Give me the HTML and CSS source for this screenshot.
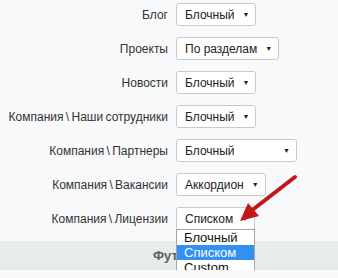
FILE: index.html
```html
<!DOCTYPE html>
<html lang="ru">
<head>
  <meta charset="UTF-8" />
  <title>Настройки разделов</title>
  <link rel="stylesheet" href="styles.css">
</head>
<body>
  <div class="settings">
    <div class="row">
      <label>Блог</label>
      <div class="select"><span>Блочный</span><i>▼</i></div>
    </div>
    <div class="row">
      <label>Проекты</label>
      <div class="select"><span>По разделам</span><i>▼</i></div>
    </div>
    <div class="row">
      <label>Новости</label>
      <div class="select"><span>Блочный</span><i>▼</i></div>
    </div>
    <div class="row">
      <label>Компания \ Наши сотрудники</label>
      <div class="select"><span>Блочный</span><i>▼</i></div>
    </div>
    <div class="row">
      <label>Компания \ Партнеры</label>
      <div class="select wide"><span>Блочный</span><i>▼</i></div>
    </div>
    <div class="row">
      <label>Компания \ Вакансии</label>
      <div class="select"><span>Аккордион</span><i>▼</i></div>
    </div>
    <div class="row">
      <label>Компания \ Лицензии</label>
      <div class="select open">
        <span>Списком</span><i>▼</i>
        <ul class="options">
          <li>Блочный</li>
          <li class="active">Списком</li>
          <li>Custom</li>
        </ul>
      </div>
    </div>
  </div>

  <div class="footer-bar">Футер</div>

  <svg class="pointer" width="338" height="278" viewBox="0 0 338 278">
    <line x1="295" y1="177" x2="251" y2="211" stroke="#c3161b" stroke-width="4" stroke-linecap="round" />
    <polygon points="240,221 248,203 259,216" fill="#c3161b" />
  </svg>
</body>
</html>
```

FILE: styles.css
```css
body {
  font-family: "Liberation Sans", Arial, sans-serif;
  background-color: #f7f9fa;
  margin: 0;
  color: #222;
}

.settings {
  padding-top: 3px;
}

.row {
  display: grid;
  grid-template-columns: 168px auto;
  column-gap: 8px;
  align-items: center;
  height: 23px;
  margin-bottom: 11px;
}

.row label {
  text-align: right;
  font-size: 12px;
  word-spacing: -1px;
  color: #333;
  white-space: nowrap;
}

.select {
  position: relative;
  justify-self: start;
  display: inline-flex;
  align-items: center;
  box-sizing: border-box;
  height: 23px;
  padding: 0 6px 0 8px;
  background: #fff;
  border: 1px solid #c9c9c9;
  border-radius: 3px;
  font-size: 12px;
  color: #222;
}

.select i {
  font-style: normal;
  font-size: 7px;
  margin-left: 8px;
}

.select.wide {
  width: 121px;
}

.select.wide i {
  margin-left: auto;
}

.options {
  position: absolute;
  top: 21px;
  left: -1px;
  width: 77px;
  margin: 0;
  padding: 0;
  list-style: none;
  background: #fff;
  border: 1px solid #a5a5a5;
  z-index: 2;
}

.options li {
  height: 15px;
  line-height: 15px;
  padding-left: 7px;
  font-size: 13px;
  color: #111;
}

.options li.active {
  background: #3390f0;
  color: #fff;
}

.footer-bar {
  margin-top: 4px;
  height: 29px;
  line-height: 29px;
  background: #e8ebec;
  text-align: center;
  font-size: 13px;
  font-weight: bold;
  color: #5b5e60;
  padding-left: 8px;
}

.pointer {
  position: absolute;
  top: 0;
  left: 0;
  z-index: 3;
  pointer-events: none;
}
```
